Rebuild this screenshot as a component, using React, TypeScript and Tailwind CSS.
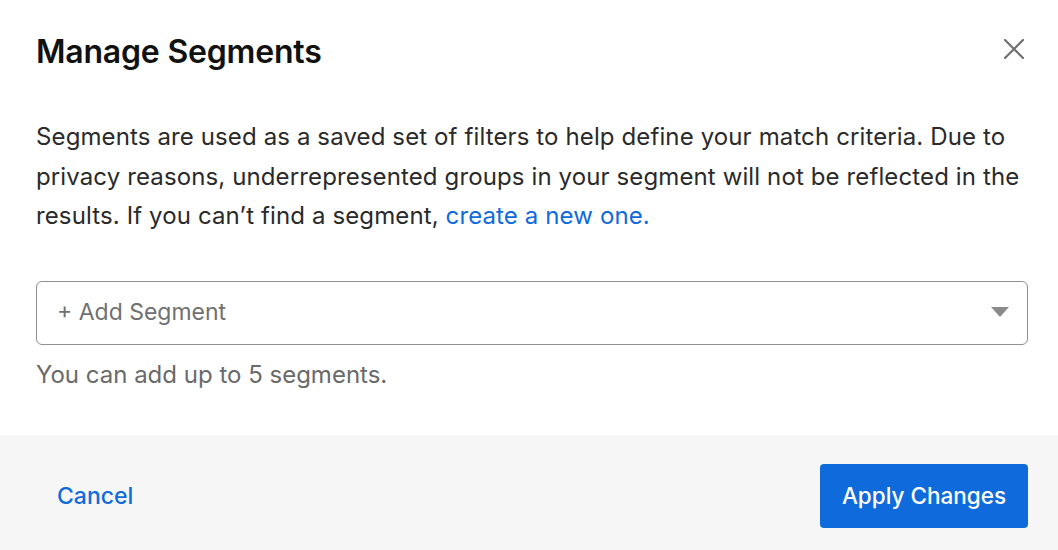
export default function App() {
  return (
    <div className="w-[1058px] h-[550px] bg-white flex flex-col font-['Inter',sans-serif]">
      {/* Header */}
      <div className="flex items-start justify-between pl-9 pr-[34px] pt-[33px]">
        <h1 className="text-[32px] leading-[38px] font-semibold text-[#111] tracking-[-0.2px]">Manage Segments</h1>
        <button className="mt-[6px] text-[#6e6e6e]">
          <svg width="20" height="20" viewBox="0 0 20 20">
            <path d="M1 1 L19 19 M19 1 L1 19" stroke="currentColor" strokeWidth="2.2" strokeLinecap="round" />
          </svg>
        </button>
      </div>

      {/* Body */}
      <div className="pl-9 pr-[30px] pt-[46px] flex-1">
        <p className="text-[24px] leading-[39.5px] text-[#2a2a2a] tracking-[0.12px]">
          Segments are used as a saved set of filters to help define your match criteria. Due to privacy reasons,
          underrepresented groups in your segment will not be reflected in the results. If you can’t find a segment,{' '}
          <a href="#" className="text-[#0f6bdc]">create a new one.</a>
        </p>

        <div className="mt-[45px] h-16 border border-[#8f8f8f] rounded-[6px] flex items-center justify-between pl-5 pr-[18px]">
          <span className="text-[23px] text-[#707070]">+ Add Segment</span>
          <svg width="18" height="11" viewBox="0 0 18 11">
            <path d="M0 0 L18 0 L9 10 Z" fill="#8a8a8a" />
          </svg>
        </div>

        <p className="mt-[13px] text-[24px] leading-[34px] text-[#6a6a6a]">You can add up to 5 segments.</p>
      </div>

      {/* Footer */}
      <div className="h-[115px] bg-[#f6f6f6] flex items-start justify-between pl-[57px] pr-[30px] pt-[29px]">
        <button className="h-16 text-[23px] font-medium text-[#0f6bdc]">Cancel</button>
        <button className="h-16 w-[208px] rounded-[4px] bg-[#0f6bdc] text-white text-[22.5px] font-medium">
          Apply Changes
        </button>
      </div>
    </div>
  )
}
